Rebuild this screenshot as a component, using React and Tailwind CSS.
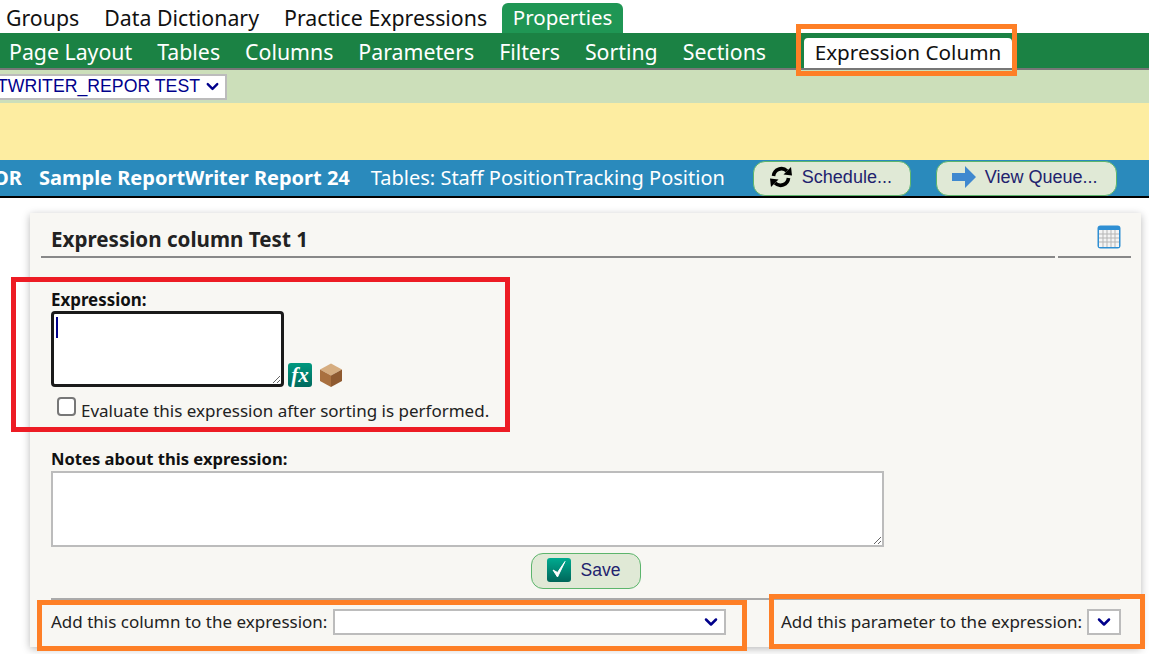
import { ChevronDown } from 'lucide-react'

const TOP_NAV = ['Groups', 'Data Dictionary', 'Practice Expressions']
const SUB_NAV = ['Page Layout', 'Tables', 'Columns', 'Parameters', 'Filters', 'Sorting', 'Sections']

const UI_FONT = 'font-["Noto_Sans",sans-serif]'
const ARIAL = 'font-["Liberation_Sans",Arial,sans-serif]'

function SyncIcon() {
  return (
    <svg width="24" height="24" viewBox="0 0 24 24" fill="none">
      <path d="M4.5 11a8 8 0 0 1 13.5-5" stroke="#000" strokeWidth="3.6" />
      <path d="M14.5 9.5 L23 10.5 L22 2 Z" fill="#000" />
      <path d="M19.5 13a8 8 0 0 1-13.5 5" stroke="#000" strokeWidth="3.6" />
      <path d="M9.5 14.5 L1 13.5 L2 22 Z" fill="#000" />
    </svg>
  )
}

function ArrowIcon() {
  return (
    <svg width="24" height="22" viewBox="0 0 24 22">
      <path d="M0 7 H13 V0 L24 11 L13 22 V15 H0 Z" fill="#3f88cf" />
    </svg>
  )
}

function CalendarIcon() {
  return (
    <svg width="24" height="24" viewBox="0 0 24 24">
      <rect x="0.5" y="0.5" width="23" height="23" rx="3" fill="#2f8fd3" />
      <rect x="2" y="5" width="20" height="17" fill="#f4f4f4" />
      <path d="M2 9h20M2 13h20M2 17h20M6 5v17M10 5v17M14 5v17M18 5v17" stroke="#b5b5b5" strokeWidth="1" />
    </svg>
  )
}

function CubeIcon() {
  return (
    <svg width="24" height="24" viewBox="0 0 24 24">
      <path d="M12 0.5 L23 6.5 L12 12.5 L1 6.5 Z" fill="#d6ad80" />
      <path d="M1 6.5 L12 12.5 V24 L1 18 Z" fill="#a9703f" />
      <path d="M23 6.5 L12 12.5 V24 L23 18 Z" fill="#8f5a30" />
    </svg>
  )
}

function CheckIcon() {
  return (
    <svg width="24" height="24" viewBox="0 0 24 24">
      <defs>
        <linearGradient id="tealCheck" x1="0" y1="0" x2="0" y2="1">
          <stop offset="0" stopColor="#00ab90" />
          <stop offset="1" stopColor="#00665a" />
        </linearGradient>
      </defs>
      <rect width="24" height="24" rx="3" fill="url(#tealCheck)" />
      <path d="M6 12 L10.5 19 L18 3.5 L10.5 14.5 Z" fill="#fff" stroke="#fff" strokeWidth="1" />
    </svg>
  )
}

function PillButton({ icon, label, className }) {
  return (
    <div className={`flex items-center rounded-[12px] border border-[#5cb56c] bg-[#e0e9d6] text-[#22226e] ${ARIAL} ${className}`}>
      {icon}
      <span>{label}</span>
    </div>
  )
}

function Chevron() {
  return <ChevronDown size={20} strokeWidth={3} className="text-[#00008b]" />
}

export default function App() {
  return (
    <div className={`relative h-[654px] w-[1149px] overflow-hidden bg-white text-[#111] ${UI_FONT}`}>
      {/* top tabs */}
      <div className="flex h-[33px] items-end gap-[25px] pl-[6px] text-[21.3px] leading-[30px]">
        {TOP_NAV.map((t) => (
          <span key={t}>{t}</span>
        ))}
        <span className="-ml-[10px] h-[30px] w-[121px] rounded-t-[6px] bg-[#1f9654] text-center text-[20.5px] leading-[28px] text-white">Properties</span>
      </div>

      {/* sub nav */}
      <div className="flex h-[37px] items-stretch border-b-2 border-[#777] bg-[#1b8244] pl-[9px] text-[21.3px] text-white">
        <div className="flex w-[795px] shrink-0 items-center gap-[25px] pt-[2px]">
          {SUB_NAV.map((t) => (
            <span key={t}>{t}</span>
          ))}
        </div>
        <div className="mt-[5px] flex w-[208px] -mb-[2px] items-center justify-center rounded-t-[4px] border-b-2 border-[#777] bg-white text-[20.7px] text-[#111]">
          Expression Column
        </div>
      </div>

      {/* table picker strip */}
      <div className="flex h-[33px] items-center bg-[#ccdfba]">
        <div className={`flex h-[26px] w-[227px] items-center justify-end overflow-hidden border-2 border-l-0 border-[#bcbcbc] bg-white pr-[3px] text-[17.7px] whitespace-nowrap text-[#00008b] ${ARIAL}`}>
          <span>TWRITER_REPOR TEST</span>
          <ChevronDown size={19} strokeWidth={3} className="ml-[3px] shrink-0" />
        </div>
      </div>

      {/* message strip */}
      <div className="h-[57px] bg-[#fdeda1]" />

      {/* report bar */}
      <div className="flex h-[38px] items-center border-b-2 border-black bg-[#2a8abc] text-[20px] text-white">
        <span className="flex w-[22px] shrink-0 justify-end overflow-hidden font-bold whitespace-nowrap">OR</span>
        <span className="ml-[17px] font-bold">Sample ReportWriter Report 24</span>
        <span className="ml-[21px]">Tables: Staff PositionTracking Position</span>
        <PillButton icon={<SyncIcon />} label="Schedule..." className="ml-[28px] h-[35px] w-[158px] gap-[9px] pb-[2px] pl-[15px] text-[18px]" />
        <PillButton icon={<ArrowIcon />} label="View Queue..." className="ml-[25px] h-[35px] w-[181px] gap-[9px] pb-[2px] pl-[15px] text-[18px]" />
      </div>

      {/* card */}
      <div className="ml-[30px] mt-[15px] flex h-[434px] w-[1111px] flex-col bg-[#f8f7f3] pl-[21px] shadow-[0_2px_8px_rgba(0,0,0,0.28)]">
        <div className="-ml-[10px] flex h-[45px] shrink-0 gap-[3px]">
          <div className="flex w-[1014px] items-center border-b-2 border-[#888] pl-[10px] pt-[10px] text-[20.6px] font-bold text-[#222]">
            Expression column Test 1
          </div>
          <div className="flex w-[73px] justify-end border-b-2 border-[#888] pr-[10px] pt-[12px]">
            <CalendarIcon />
          </div>
        </div>

        <label className="mt-[32px] text-[16.9px] leading-[20px] font-bold text-[#111]">Expression:</label>
        <div className="mt-[1px] flex items-end gap-[4px]">
          <div className="relative h-[76px] w-[233px]">
            <textarea className="block h-full w-full rounded-[4px] border-[3px] border-[#1a1a1a] bg-white outline-none" />
            <span className="absolute left-[5px] top-[6px] h-[21px] w-[2px] bg-[#00008b]" />
          </div>
          <div className={`flex h-[24px] w-[24px] items-center justify-center rounded-[3px] bg-gradient-to-b from-[#00997f] to-[#006a5e] text-[21px] leading-none font-bold text-white italic font-["Liberation_Serif",serif]`}>
            fx
          </div>
          <div className="ml-[3px]">
            <CubeIcon />
          </div>
        </div>
        <div className="ml-[6px] mt-[10px] flex items-start">
          <span className="h-[19px] w-[19px] rounded-[4px] border-2 border-[#777] bg-white" />
          <span className="ml-[5px] mt-[2px] text-[17px] leading-[23px] text-[#222]">Evaluate this expression after sorting is performed.</span>
        </div>

        <label className="mt-[27px] text-[16.6px] leading-[20px] font-bold text-[#111]">Notes about this expression:</label>
        <textarea className="mt-[2px] block h-[76px] w-[833px] shrink-0 border-2 border-[#bcbcbc] bg-white outline-none" />

        <div className="mt-[6px] flex w-[1069px] justify-center">
          <PillButton icon={<CheckIcon />} label="Save" className="h-[36px] w-[110px] gap-[10px] pb-[2px] pl-[15px] text-[17.5px]" />
        </div>

        <div className="mt-[9px] flex h-[2px] w-[1069px] shrink-0 bg-[#aaa]" />

        <div className="mt-[9px] flex items-center text-[17px] text-[#222]">
          <span className="w-[282px]">Add this column to the expression:</span>
          <div className="flex h-[26px] w-[393px] items-center justify-end border-2 border-[#bcbcbc] bg-white pr-[3px]">
            <Chevron />
          </div>
          <span className="ml-[55px] w-[306px]">Add this parameter to the expression:</span>
          <div className="flex h-[26px] w-[34px] items-center justify-center border-2 border-[#bcbcbc] bg-white">
            <Chevron />
          </div>
        </div>
      </div>

      {/* annotation boxes drawn over the screenshot */}
      <div className="absolute left-[796px] top-[24px] h-[52px] w-[221px] border-[5px] border-[#fe7f26]" />
      <div className="absolute left-[11px] top-[277px] h-[155px] w-[499px] border-[5px] border-[#ed1c24]" />
      <div className="absolute left-[37px] top-[600px] h-[51px] w-[710px] border-[5px] border-[#fe7f26]" />
      <div className="absolute left-[769px] top-[594px] h-[55px] w-[376px] border-[5px] border-[#fe7f26]" />
    </div>
  )
}
